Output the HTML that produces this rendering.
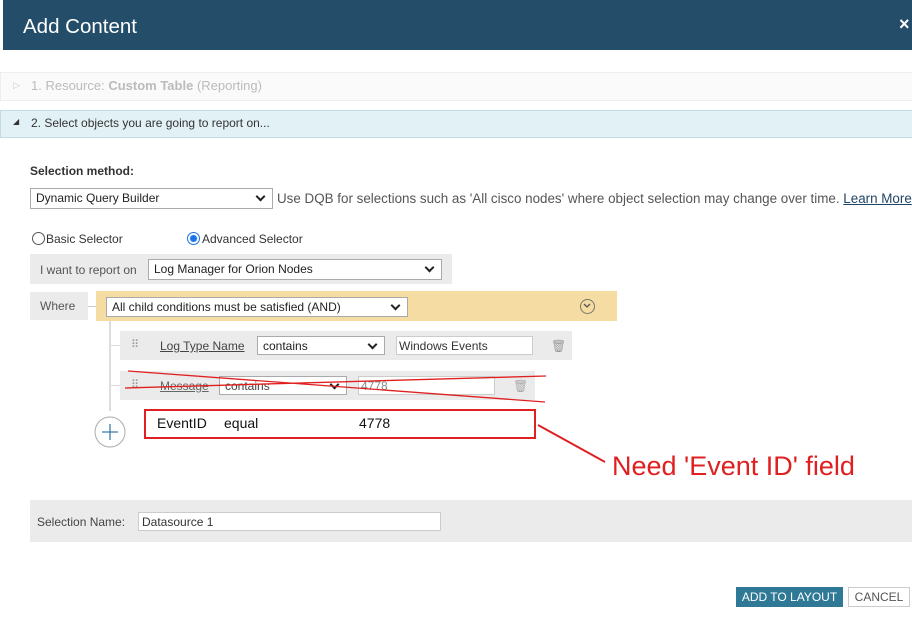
<!DOCTYPE html>
<html><head><style>
body{margin:0;width:912px;height:617px;position:relative;background:#fff;font-family:"Liberation Sans",sans-serif;overflow:hidden}
.a{position:absolute}
.sel{position:absolute;background:#fff;border:1px solid #aaa;font-size:12px;color:#222;box-sizing:border-box;padding:2px 5px;line-height:15px}
.sel:after{content:"";position:absolute;right:8px;top:4px;width:5px;height:5px;border-right:2px solid #222;border-bottom:2px solid #222;transform:rotate(45deg)}
.t{font-size:12px;color:#333}
</style></head><body>
<div class="a" style="left:3px;top:0;width:909px;height:50px;background:#234d69"></div>
<div class="a" style="left:23px;top:15px;font-size:20.5px;color:#fff">Add Content</div>
<div class="a" style="left:899px;top:14px;font-size:18px;color:#fff;font-weight:bold">×</div>
<div class="a" style="left:0;top:72px;width:912px;height:27px;border:1px solid #eee;background:#fafafa"></div>
<div class="a" style="left:13px;top:80px;font-size:9px;color:#ccc">▷</div>
<div class="a" style="left:31px;top:78px;font-size:13px;color:#bbb">1. Resource: <b>Custom Table</b> (Reporting)</div>
<div class="a" style="left:0;top:110px;width:912px;height:26px;background:#e2f1f6;border:1px solid #c5dbe3"></div>
<div class="a" style="left:13px;top:117px;font-size:8px;color:#333">◢</div>
<div class="a" style="left:31px;top:116px;font-size:12px;color:#333">2. Select objects you are going to report on...</div>
<div class="a t" style="left:30px;top:164px;font-weight:bold;color:#333">Selection method:</div>
<div class="sel" style="left:30px;top:188px;width:243px;height:21px">Dynamic Query Builder</div>
<div class="a t" style="left:277px;top:191px;font-size:13.4px;color:#555;white-space:nowrap">Use DQB for selections such as 'All cisco nodes' where object selection may change over time. <u style="color:#246">Learn More</u></div>
<div class="a" style="left:32px;top:232px;width:11px;height:11px;border:1px solid #555;border-radius:50%"></div>
<div class="a t" style="left:46px;top:232px">Basic Selector</div>
<div class="a" style="left:187px;top:232px;width:11px;height:11px;border:1px solid #1a73e8;border-radius:50%;background:radial-gradient(#1a73e8 3px,#fff 4px)"></div>
<div class="a t" style="left:202px;top:232px">Advanced Selector</div>
<div class="a" style="left:30px;top:254px;width:422px;height:30px;background:#ebebeb"></div>
<div class="a t" style="left:40px;top:263px;color:#555">I want to report on</div>
<div class="sel" style="left:148px;top:259px;width:294px;height:21px">Log Manager for Orion Nodes</div>
<div class="a" style="left:30px;top:292px;width:58px;height:28px;background:#ebebeb"></div>
<div class="a t" style="left:40px;top:299px;color:#555">Where</div>
<div class="a" style="left:88px;top:306px;width:10px;height:1px;background:#ccc"></div>
<div class="a" style="left:96px;top:291px;width:521px;height:30px;background:#f5dca2"></div>
<div class="sel" style="left:106px;top:297px;width:302px;height:20px">All child conditions must be satisfied (AND)</div>
<div class="a" style="left:580px;top:299px;width:13px;height:13px;border:1px solid #776;border-radius:50%"></div>
<div class="a" style="left:109px;top:321px;width:2px;height:90px;background:#ddd"></div>
<div class="a" style="left:111px;top:345px;width:9px;height:1px;background:#ddd"></div>
<div class="a" style="left:111px;top:385px;width:9px;height:1px;background:#ddd"></div>
<div class="a" style="left:120px;top:331px;width:452px;height:29px;background:#ebebeb"></div>
<div class="a" style="left:131px;top:338px;font-size:11px;color:#999">⠿</div>
<div class="a t" style="left:160px;top:339px;text-decoration:underline;color:#444">Log Type Name</div>
<div class="sel" style="left:257px;top:336px;width:128px;height:19px">contains</div>
<div class="a t" style="left:396px;top:336px;width:137px;height:19px;border:1px solid #ccc;background:#fff;box-sizing:border-box;padding:2px">Windows Events</div>
<div class="a" style="left:551px;top:339px;font-size:12px;color:#999">🗑</div>
<div class="a" style="left:120px;top:371px;width:415px;height:29px;background:#ebebeb"></div>
<div class="a" style="left:131px;top:378px;font-size:11px;color:#999">⠿</div>
<div class="a t" style="left:160px;top:379px;text-decoration:underline;color:#666">Message</div>
<div class="sel" style="left:219px;top:376px;width:128px;height:19px;color:#444">contains</div>
<div class="a t" style="left:358px;top:376px;width:137px;height:19px;border:1px solid #ccc;background:#fff;box-sizing:border-box;padding:2px;color:#888">4778</div>
<div class="a" style="left:513px;top:379px;font-size:12px;color:#aaa">🗑</div>
<svg class="a" style="left:0;top:0" width="912" height="617"><g stroke="#e02020" stroke-width="1.3" fill="none">
<line x1="128" y1="371" x2="545" y2="402"/><line x1="125" y1="388" x2="546" y2="376"/>
<line x1="538" y1="425" x2="605" y2="462" stroke-width="2"/></g>
<circle cx="110" cy="432" r="15" fill="#fff" stroke="#aaa"/><path d="M110 424v16M102 432h16" stroke="#3a7ca5" stroke-width="1.3"/>
<path d="M584 304l3 3 3-3" stroke="#555" fill="none" stroke-width="1.3"/></svg>
<div class="a" style="left:144px;top:409px;width:388px;height:26px;border:2px solid #e02020"></div>
<div class="a" style="left:157px;top:415px;font-size:14px;color:#111">EventID</div>
<div class="a" style="left:224px;top:415px;font-size:14px;color:#111">equal</div>
<div class="a" style="left:359px;top:415px;font-size:14px;color:#111">4778</div>
<div class="a" style="left:612px;top:451px;font-size:27px;color:#e02020;white-space:nowrap">Need 'Event ID' field</div>
<div class="a" style="left:30px;top:500px;width:882px;height:42px;background:#ebebeb"></div>
<div class="a t" style="left:37px;top:515px;color:#444">Selection Name:</div>
<div class="a t" style="left:138px;top:512px;width:303px;height:19px;border:1px solid #ccc;background:#fff;box-sizing:border-box;padding:2px 3px">Datasource 1</div>
<div class="a" style="left:736px;top:587px;width:107px;height:20px;background:#2f7996;color:#fff;font-size:12px;text-align:center;line-height:20px">ADD TO LAYOUT</div>
<div class="a" style="left:848px;top:587px;width:62px;height:20px;border:1px solid #ccc;box-sizing:border-box;color:#555;font-size:12px;text-align:center;line-height:18px">CANCEL</div>
</body></html>
